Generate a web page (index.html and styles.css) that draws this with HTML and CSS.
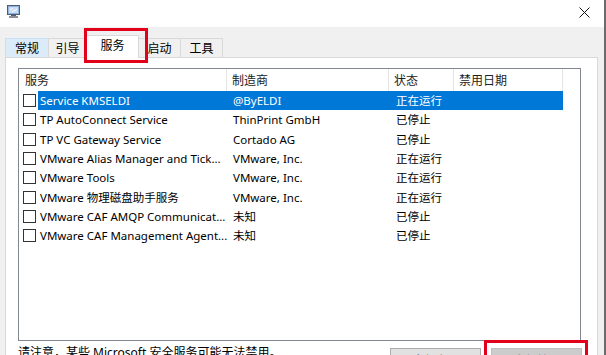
FILE: index.html
```html
<!DOCTYPE html>
<html>
	<head>
		<meta charset="utf-8">
		<link rel="stylesheet" href="styles.css">
	</head>
	<body>
		<div class="window">
			<div class="titlebar">
				<svg class="appicon" width="13" height="13" viewBox="0 0 13 13">
					<rect x="0.5" y="0.5" width="12" height="9" fill="#8fb4e0" stroke="#4d5d78"/>
					<rect x="2" y="2" width="9" height="6" fill="#c9dcf2"/>
					<path d="M3 5 L6 3 M5 7 L10 4" stroke="#ffffff" stroke-width="1"/>
					<rect x="4" y="10" width="5" height="1" fill="#4d5d78"/>
					<rect x="2" y="11" width="9" height="2" fill="#8a8f98"/>
				</svg>
				<div class="spacer"></div>
				<svg class="close" width="11" height="11" viewBox="0 0 11 11">
					<path d="M0.5 0.5 L10.5 10.5 M10.5 0.5 L0.5 10.5" stroke="#111" stroke-width="1"/>
				</svg>
			</div>
			<div class="tabs">
				<div class="tab hover t1">常规</div>
				<div class="tab t2">引导</div>
				<div class="tab active t3">服务</div>
				<div class="tab t4">启动</div>
				<div class="tab t5">工具</div>
			</div>
			<div class="panel">
				<div class="list">
					<div class="head">
						<div class="hcell first">服务</div>
						<div class="hcell">制造商</div>
						<div class="hcell">状态</div>
						<div class="hcell">禁用日期</div>
					</div>
					<div class="row sel">
						<span class="check"></span>
						<div class="cells"><span class="c1">Service KMSELDI</span><span class="c2">@ByELDI</span><span class="c3">正在运行</span><span></span></div>
					</div>
					<div class="row">
						<span class="check"></span>
						<div class="cells"><span class="c1">TP AutoConnect Service</span><span class="c2">ThinPrint GmbH</span><span class="c3">已停止</span><span></span></div>
					</div>
					<div class="row">
						<span class="check"></span>
						<div class="cells"><span class="c1">TP VC Gateway Service</span><span class="c2">Cortado AG</span><span class="c3">已停止</span><span></span></div>
					</div>
					<div class="row">
						<span class="check"></span>
						<div class="cells"><span class="c1">VMware Alias Manager and Tick...</span><span class="c2">VMware, Inc.</span><span class="c3">正在运行</span><span></span></div>
					</div>
					<div class="row">
						<span class="check"></span>
						<div class="cells"><span class="c1">VMware Tools</span><span class="c2">VMware, Inc.</span><span class="c3">正在运行</span><span></span></div>
					</div>
					<div class="row">
						<span class="check"></span>
						<div class="cells"><span class="c1">VMware 物理磁盘助手服务</span><span class="c2">VMware, Inc.</span><span class="c3">正在运行</span><span></span></div>
					</div>
					<div class="row">
						<span class="check"></span>
						<div class="cells"><span class="c1">VMware CAF AMQP Communicat...</span><span class="c2">未知</span><span class="c3">已停止</span><span></span></div>
					</div>
					<div class="row">
						<span class="check"></span>
						<div class="cells"><span class="c1">VMware CAF Management Agent...</span><span class="c2">未知</span><span class="c3">已停止</span><span></span></div>
					</div>
				</div>
				<div class="footer">
					<div class="note">请注意，某些 Microsoft 安全服务可能无法禁用。</div>
					<div class="buttons">
						<div class="btn">全部启用</div>
						<div class="btn off">全部禁用</div>
					</div>
				</div>
			</div>
			<div class="mark mark-tab"></div>
			<div class="mark mark-btn"></div>
		</div>
	</body>
</html>
```
FILE: styles.css
```css
html, body {
	margin: 0;
	padding: 0;
}
body {
	width: 606px;
	height: 355px;
	overflow: hidden;
	font-family: "Noto Sans", "Noto Sans CJK SC", sans-serif;
	font-size: 11.5px;
	color: #000;
}
.window {
	position: relative;
	width: 606px;
	height: 355px;
	box-sizing: border-box;
	background-color: #f0f0f0;
	border-right: 2px solid #6b6b6b;
	overflow: hidden;
}
.titlebar {
	height: 27px;
	background-color: #fff;
	display: flex;
	align-items: flex-start;
	padding: 5px 14px 0 7px;
	box-sizing: border-box;
}
.spacer {
	flex: 1;
}
.close {
	margin-top: 2px;
}
.tabs {
	display: flex;
	align-items: flex-end;
	height: 23px;
	margin-top: 8px;
	padding-left: 5px;
	position: relative;
	z-index: 1;
	font-size: 12px;
}
.tab {
	height: 19px;
	margin-bottom: 1px;
	margin-left: -1px;
	box-sizing: border-box;
	border: 1px solid #d9d9d9;
	border-bottom: none;
	background-color: #f0f0f0;
	text-align: center;
	line-height: 19px;
}
.t1 { width: 44px; margin-left: 0; }
.t2 { width: 39px; }
.t3 { width: 53px; }
.t4 { width: 43px; }
.t5 { width: 43px; }
.tab.hover {
	background-color: #dcebf9;
	border-color: #c9dff3;
}
.tab.active {
	height: 23px;
	margin-bottom: 0;
	background-color: #fff;
	line-height: 20px;
}
.panel {
	margin: -1px 6px 0 5px;
	height: 300px;
	background-color: #fff;
	border: 1px solid #d9d9d9;
	padding: 10px 15px 0 12px;
}
.list {
	width: 563px;
	height: 273px;
	box-sizing: border-box;
	border: 1px solid #828790;
}
.head {
	display: grid;
	grid-template-columns: 208px 162px 65px 109px;
	height: 22px;
	line-height: 23px;
	color: #222;
	font-size: 12px;
}
.hcell {
	border-right: 1px solid #e5e5e5;
	padding-left: 5px;
	white-space: nowrap;
}
.hcell.first {
	padding-left: 6px;
}
.row {
	display: flex;
	align-items: center;
	height: 19.3px;
	padding-left: 4px;
}
.check {
	width: 13px;
	height: 13px;
	box-sizing: border-box;
	border: 1px solid #333;
	background-color: #fff;
	margin-right: 2px;
}
.cells {
	display: grid;
	grid-template-columns: 189px 162px 65px 109px;
	height: 19px;
	line-height: 20px;
	white-space: nowrap;
}
.cells span {
	overflow: hidden;
}
.c1 {
	padding-left: 2px;
}
.c2 {
	padding-left: 6px;
}
.c3 {
	padding-left: 7px;
}
.row.sel .cells {
	background-color: #0078d7;
	color: #fff;
}
.footer {
	display: flex;
	justify-content: space-between;
}
.note {
	margin-top: 4px;
	line-height: 16px;
	white-space: nowrap;
	font-size: 12px;
}
.buttons {
	display: flex;
	gap: 10px;
	margin-top: 7px;
}
.btn {
	width: 91px;
	height: 23px;
	box-sizing: border-box;
	border: 1px solid #adadad;
	background-color: #e1e1e1;
	text-align: center;
	line-height: 21px;
	color: #8a8a8a;
}
.btn.off {
	background-color: #cccccc;
	border-color: #bfbfbf;
	color: #a0a0a0;
}
.mark {
	position: absolute;
	border: 3px solid #e2001a;
	box-sizing: border-box;
	z-index: 2;
}
.mark-tab {
	left: 84px;
	top: 28px;
	width: 64px;
	height: 35px;
}
.mark-btn {
	left: 484px;
	top: 340px;
	width: 104px;
	height: 30px;
}
```
